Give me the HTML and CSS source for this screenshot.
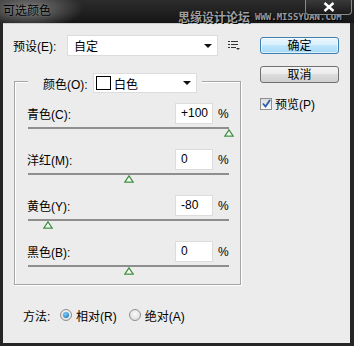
FILE: index.html
```html
<!DOCTYPE html>
<html lang="zh-CN">

<head>
  <meta charset="UTF-8">
  <title>可选颜色</title>
  <link rel="stylesheet" href="styles.css">
</head>

<body>
  <div class="window">
    <div class="titlebar">
      <span class="title">可选颜色</span>
      <span class="close">
        <svg width="12" height="10" viewBox="0 0 12 10"><path d="M1.5 1 L10.5 9 M10.5 1 L1.5 9" stroke="#fff" stroke-width="2.4"/></svg>
      </span>
      <div class="watermark">
        <span class="wm-cn">思缘设计论坛</span>
        <span class="wm-en">WWW.MISSYUAN.COM</span>
      </div>
    </div>

    <div class="client">
      <div class="main">
        <div class="preset">
          <span class="preset-label">预设(E):</span>
          <div class="select preset-select">
            <span>自定</span>
            <span class="arrow"></span>
          </div>
          <svg class="menu-icon" width="13" height="11" viewBox="0 0 13 11">
            <rect x="0" y="0" width="2" height="1" fill="#333"/>
            <rect x="3" y="0" width="7" height="1" fill="#333"/>
            <rect x="0" y="3" width="2" height="1" fill="#333"/>
            <rect x="3" y="3" width="7" height="1" fill="#333"/>
            <rect x="0" y="6" width="2" height="1" fill="#333"/>
            <rect x="3" y="6" width="5" height="1" fill="#333"/>
            <path d="M8 7 L12 7 L10 9 Z" fill="#333"/>
          </svg>
        </div>

        <div class="group">
          <div class="group-head">
            <span class="group-label">颜色(O):</span>
            <div class="select color-select">
              <span class="swatch"></span>
              <span class="color-name">白色</span>
              <span class="arrow"></span>
            </div>
          </div>

          <div class="rows">
            <div class="row">
              <div class="row-top">
                <span class="row-label">青色(C):</span>
                <span class="num">+100</span>
                <span class="pct">%</span>
              </div>
              <div class="track">
                <svg class="thumb" style="left: 100%" width="10" height="8" viewBox="0 0 10 8"><path d="M5 0.8 L9.2 7.2 L0.8 7.2 Z" fill="#f4faf4" stroke="#3f8f3f" stroke-width="1.2"/></svg>
              </div>
            </div>
            <div class="row">
              <div class="row-top">
                <span class="row-label">洋红(M):</span>
                <span class="num">0</span>
                <span class="pct">%</span>
              </div>
              <div class="track">
                <svg class="thumb" style="left: 50%" width="10" height="8" viewBox="0 0 10 8"><path d="M5 0.8 L9.2 7.2 L0.8 7.2 Z" fill="#f4faf4" stroke="#3f8f3f" stroke-width="1.2"/></svg>
              </div>
            </div>
            <div class="row">
              <div class="row-top">
                <span class="row-label">黄色(Y):</span>
                <span class="num">-80</span>
                <span class="pct">%</span>
              </div>
              <div class="track">
                <svg class="thumb" style="left: 10%" width="10" height="8" viewBox="0 0 10 8"><path d="M5 0.8 L9.2 7.2 L0.8 7.2 Z" fill="#f4faf4" stroke="#3f8f3f" stroke-width="1.2"/></svg>
              </div>
            </div>
            <div class="row">
              <div class="row-top">
                <span class="row-label">黑色(B):</span>
                <span class="num">0</span>
                <span class="pct">%</span>
              </div>
              <div class="track">
                <svg class="thumb" style="left: 50%" width="10" height="8" viewBox="0 0 10 8"><path d="M5 0.8 L9.2 7.2 L0.8 7.2 Z" fill="#f4faf4" stroke="#3f8f3f" stroke-width="1.2"/></svg>
              </div>
            </div>
          </div>
        </div>

        <div class="method">
          <span class="method-label">方法:</span>
          <span class="radio checked"></span>
          <span class="radio-text">相对(R)</span>
          <span class="radio"></span>
          <span class="radio-text">绝对(A)</span>
        </div>
      </div>

      <div class="side">
        <div class="btn btn-default">确定</div>
        <div class="btn">取消</div>
        <div class="check-row">
          <span class="checkbox">
            <svg width="9" height="9" viewBox="0 0 9 9"><path d="M1 4.5 L3.5 7.5 L8 1" fill="none" stroke="#2a5db0" stroke-width="1.8"/></svg>
          </span>
          <span>预览(P)</span>
        </div>
      </div>
    </div>
  </div>
</body>

</html>
```

FILE: styles.css
```css
body {
  margin: 0;
  background: #2a2a2a;
  font-family: "Liberation Sans", "Noto Sans CJK SC", sans-serif;
  font-size: 12px;
  color: #000;
}

.window {
  width: 354px;
  height: 346px;
  background: #262626;
  display: flex;
  flex-direction: column;
}

/* title bar */

.titlebar {
  position: relative;
  height: 23px;
  flex-shrink: 0;
  display: flex;
  align-items: flex-start;
  background: radial-gradient(ellipse 55px 20px at 28px 9px, #7c7c7c, rgba(60, 60, 60, 0) 100%),
    linear-gradient(#2c2c2c, #161616);
}

.title {
  padding: 3px 0 0 3px;
  font-family: "Noto Sans CJK SC", sans-serif;
  font-size: 12px;
  line-height: 14px;
  color: #000;
  text-shadow: 0 0 2px rgba(200, 200, 200, 0.4);
}

.close {
  margin-left: auto;
  margin-right: 2px;
  width: 45px;
  height: 14px;
  border: 1px solid #8a8a8a;
  border-top: none;
  border-radius: 0 0 4px 4px;
  background: linear-gradient(#3a3a3a, #1a1a1a);
  display: flex;
  justify-content: center;
  align-items: center;
  z-index: 1;
}

.watermark {
  position: absolute;
  left: 178px;
  top: 10px;
  display: flex;
  align-items: center;
  gap: 5px;
}

.wm-cn {
  font-family: "Noto Sans CJK SC", sans-serif;
  font-size: 12px;
  font-weight: bold;
  line-height: 14px;
  color: #a0a0a0;
  text-shadow: 0 0 1px #000, 1px 1px 0 #000;
}

.wm-en {
  font-family: "DejaVu Sans Mono", monospace;
  font-size: 9px;
  font-weight: bold;
  line-height: 10px;
  color: #9a9a9a;
  text-shadow: 1px 1px 0 #000;
}

/* client area */

.client {
  flex: 1;
  margin: 0 4px 3px 3px;
  border-top: 1px solid #cfcfcf;
  background: #ececec;
  display: flex;
  padding: 11px 0 0 10px;
}

.main {
  width: 237px;
}

.preset {
  display: flex;
  align-items: center;
  height: 21px;
}

.preset-label {
  width: 54px;
}

.select {
  box-sizing: border-box;
  height: 21px;
  background: #fff;
  border: 1px solid #dcdcdc;
  display: flex;
  align-items: center;
}

.preset-select {
  width: 151px;
  padding-left: 6px;
}

.arrow {
  margin-left: auto;
  margin-right: 5px;
  width: 0;
  height: 0;
  border-left: 4px solid transparent;
  border-right: 4px solid transparent;
  border-top: 4px solid #111;
}

.menu-icon {
  margin-left: 10px;
  margin-top: 1px;
}

/* group box */

.group {
  box-sizing: border-box;
  width: 227px;
  margin: 25px 0 0 1px;
  border: 1px solid #a5a5a5;
  box-shadow: inset 1px 1px 0 #fff, 1px 1px 0 #fff;
  padding-bottom: 17px;
}

.group-head {
  display: flex;
  align-items: center;
  width: 174px;
  height: 20px;
  margin: -9px 0 0 13px;
  padding: 0 5px 0 15px;
  box-sizing: border-box;
  background: #ececec;
}

.group-label {
  width: 50px;
}

.color-select {
  width: 104px;
  height: 20px;
  padding-left: 2px;
}

.swatch {
  box-sizing: border-box;
  width: 15px;
  height: 14px;
  border: 1px solid #000;
  background: #fff;
  margin-right: 3px;
}

.rows {
  display: flex;
  flex-direction: column;
  gap: 20px;
  margin: 10px 0 0 12px;
}

.row-top {
  display: flex;
  align-items: center;
  height: 21px;
}

.row-label {
  width: 148px;
}

.num {
  box-sizing: border-box;
  width: 38px;
  height: 21px;
  line-height: 19px;
  padding-left: 5px;
  background: #fff;
  border: 1px solid #dcdcdc;
}

.pct {
  margin-left: 5px;
}

.track {
  position: relative;
  width: 201px;
  height: 2px;
  margin: 3px 0 0 1px;
  background: #8e8e8e;
}

.thumb {
  position: absolute;
  top: 2px;
  margin-left: -5px;
}

/* method */

.method {
  display: flex;
  align-items: center;
  height: 14px;
  margin: 23px 0 0 10px;
}

.method-label {
  width: 37px;
}

.radio {
  box-sizing: border-box;
  width: 12px;
  height: 12px;
  border-radius: 50%;
  border: 1px solid #8f8f8f;
  background: radial-gradient(circle at 50% 40%, #fafafa, #d6d6d6);
  margin-right: 4px;
  display: flex;
  justify-content: center;
  align-items: center;
}

.radio.checked::after {
  content: '';
  width: 6px;
  height: 6px;
  border-radius: 50%;
  background: radial-gradient(circle at 40% 35%, #7ad0ff, #1463a8);
}

.radio-text {
  margin-right: 12px;
}

/* side buttons */

.side {
  margin-left: 10px;
  padding-top: 2px;
  width: 79px;
}

.btn {
  box-sizing: border-box;
  height: 17px;
  margin-bottom: 12px;
  border: 1px solid #707070;
  border-radius: 3px;
  background: linear-gradient(#f4f4f4 0%, #ebebeb 45%, #dddddd 50%, #cfcfcf 100%);
  display: flex;
  justify-content: center;
  align-items: center;
  line-height: 14px;
}

.btn-default {
  border-color: #3c7fb1;
  background: linear-gradient(#eaf6fd 0%, #d9f0fc 45%, #bee6fd 50%, #a7d9f5 100%);
  box-shadow: inset 0 0 0 1px rgba(255, 255, 255, 0.6);
}

.check-row {
  display: flex;
  align-items: center;
  gap: 3px;
  margin-top: 2px;
}

.checkbox {
  box-sizing: border-box;
  width: 12px;
  height: 12px;
  border: 1px solid #8e8f8f;
  background: linear-gradient(#dcdcdc, #fafafa);
  display: flex;
  justify-content: center;
  align-items: center;
}
```
